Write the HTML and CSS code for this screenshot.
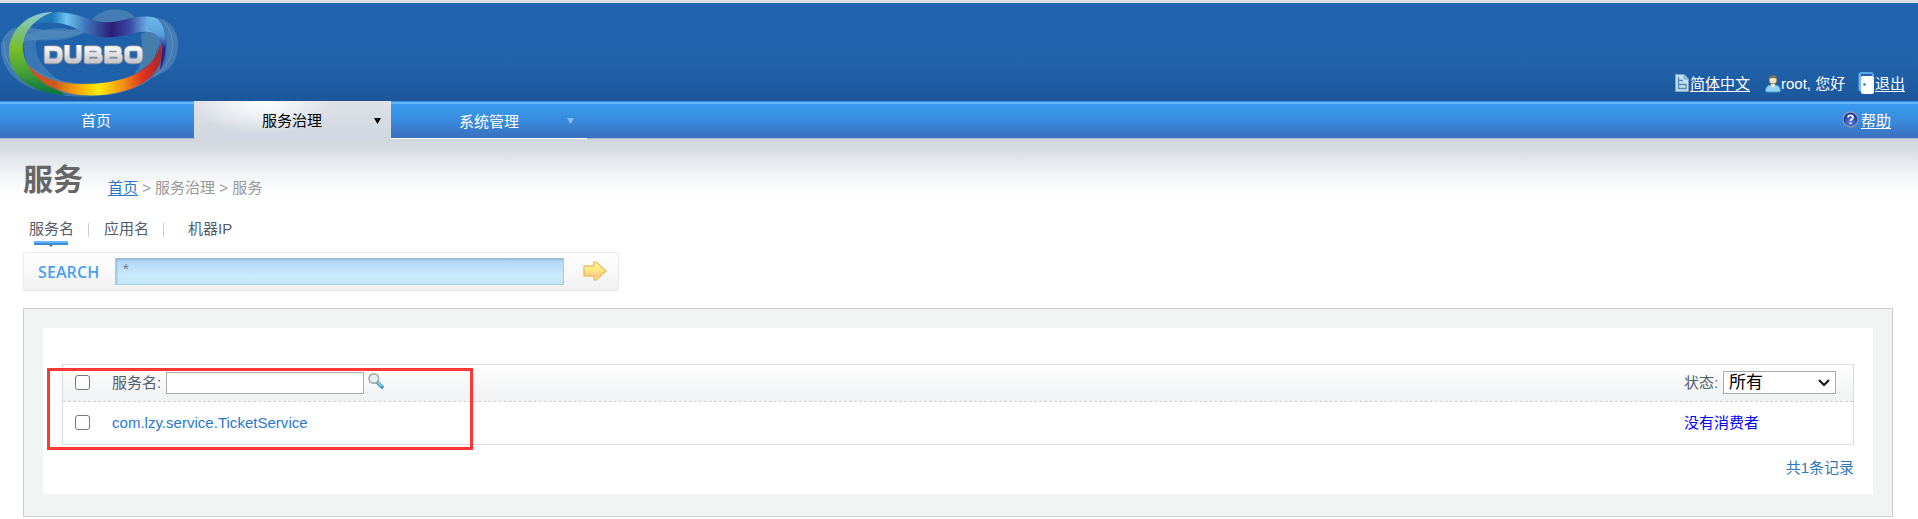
FILE: index.html
```html
<!DOCTYPE html>
<html lang="zh-CN">
<head>
<meta charset="utf-8">
<title>Dubbo</title>
<link rel="stylesheet" href="styles.css">
</head>
<body>
<header class="header">
  <svg class="logo" width="184" height="98" viewBox="0 3 184 98">
    <defs>
      <linearGradient id="ribbonTop" x1="35" x2="167" y1="0" y2="0" gradientUnits="userSpaceOnUse">
        <stop offset="0" stop-color="#2d8cc0" stop-opacity=".35"/><stop offset=".13" stop-color="#1d78bb"/><stop offset=".24" stop-color="#6cc2f0"/><stop offset=".38" stop-color="#3f77bd"/><stop offset=".58" stop-color="#2b1c78"/><stop offset=".72" stop-color="#3a4ca5"/><stop offset=".86" stop-color="#6cb7ec"/><stop offset="1" stop-color="#3c56a8"/>
      </linearGradient>
      <linearGradient id="ribbonLeft" x1="0" x2="0" y1="12" y2="95" gradientUnits="userSpaceOnUse">
        <stop offset="0" stop-color="#8ecbd6"/><stop offset=".2" stop-color="#7cc489"/><stop offset=".45" stop-color="#76bd28"/><stop offset=".7" stop-color="#49a535"/><stop offset="1" stop-color="#087340"/>
      </linearGradient>
      <linearGradient id="ribbonBottom" x1="27" x2="162" y1="0" y2="0" gradientUnits="userSpaceOnUse">
        <stop offset="0" stop-color="#e2432a"/><stop offset=".2" stop-color="#c95a20"/><stop offset=".36" stop-color="#f8a00c"/><stop offset=".53" stop-color="#ffed00"/><stop offset=".72" stop-color="#f08b13"/><stop offset=".86" stop-color="#df321f"/><stop offset="1" stop-color="#a52731"/>
      </linearGradient>
      <linearGradient id="ribbonRight" x1="0" x2="0" y1="18" y2="70" gradientUnits="userSpaceOnUse">
        <stop offset="0" stop-color="#6ab7e9"/><stop offset=".32" stop-color="#5aa0d9"/><stop offset=".58" stop-color="#29288a"/><stop offset="1" stop-color="#312277"/>
      </linearGradient>
      <linearGradient id="silver" x1="0" x2="0" y1="45" y2="64" gradientUnits="userSpaceOnUse">
        <stop offset="0" stop-color="#fff"/><stop offset=".5" stop-color="#dfe1e4"/><stop offset="1" stop-color="#bfc1c5"/>
      </linearGradient>
    </defs>
    <path d="M1 48C1 35 12 24 28 27C50 32 78 34 91 21C101 7 127 4 137 20C163 12 179 24 178 48C176 68 165 72 153 77C130 98 80 100 50 93C20 89 1 70 1 48Z" fill="#84a9c8" opacity=".36"/>
    <path d="M24 41C52 38 66 40 91 30C118 34 143 25 155 39C166 57 140 80 114 83C80 86 45 81 28 64C22 56 22 47 24 41Z" fill="#1f62ab"/>
    <path d="M4 42C3 65 18 79 48 89M164 22C180 40 172 66 153 77" fill="none" stroke="#8aaccc" opacity=".45"/>
    <path d="M25 36Q55 22 84 33Q64 44 23 39Z" fill="#538dbe" opacity=".6"/>
    <path d="M141 34L154 31Q162 47 151 63L134 75Q145 61 142 45Z" fill="#4c83ad" opacity=".85"/>
    <path d="M23 40L37 38Q30 62 65 84Q44 84 27 70Z" fill="#538dbe" opacity=".5"/>
    <path d="M53 12C29 12 9 29 9 52C9 79 35 94 66 95L58 90C40 83 24 67 23 50C22 34 31 21 53 12Z" fill="url(#ribbonLeft)"/>
    <path d="M34 24C42 13 57 11 67 13C84 15 94 24 112 22C128 20 137 15 151 17C164 20 168 35 166 53C166 62 164 68 160 71L162 45C158 27 142 31 130 34C115 38 99 40 83 32C70 25 57 20 34 24Z" fill="url(#ribbonTop)"/>
    <path d="M148 17Q158 15 163 27Q170 47 160 71L162 48Q158 30 147 30Z" fill="url(#ribbonRight)"/>
    <path d="M27 64C37 76 55 84 83 84C122 84 156 72 160 43C169 72 140 92 102 95C66 98 38 86 27 64Z" fill="url(#ribbonBottom)"/>
    <g fill="none" stroke="#858e9c" stroke-width="6.5" stroke-linejoin="round"><path id="word" d="M47 48.5H55Q60 48.5 60 53V56Q60 61 55 61H47ZM67 45V57Q67 61 71 61H75Q79 61 79 57V45M87 48.5H96Q99 48.5 99 51.5Q99 54.5 96 54.5H87H97Q100 54.5 100 58Q100 61 97 61H87ZM107 48.5H116Q119 48.5 119 51.5Q119 54.5 116 54.5H107H117Q120 54.5 120 58Q120 61 117 61H107ZM131 48.5H136Q140 48.5 140 52V57Q140 61 136 61H131Q127 61 127 57V52Q127 48.5 131 48.5Z"/></g>
    <use href="#word" fill="none" stroke="url(#silver)" stroke-width="4.7"/>
  </svg>
  <div class="account">
    <svg class="doc" width="14" height="18" viewBox="0 0 14 18"><path d="M.5.5H9L13.5 5V17.5H.5Z" fill="#c5dff2" stroke="#7fa5c9"/><path d="M9 1V5H13" fill="#9fc1df" stroke="#7fa5c9"/><path d="M3.5 3V14.5H11V10.5H3.5M3.5 6.5H8" fill="none" stroke="#5787b2" stroke-width="1.3"/></svg>
    <a class="language">简体中文</a>
    <svg class="user" width="16" height="18" viewBox="0 0 16 18"><path d="M1 17C0 13 2 10 6 10H10C14 10 16 13 15 17Z" fill="#91d4f4" stroke="#4597cb"/><path d="M6 9H10V11L8 13L6 11Z" fill="#f6f5df"/><circle cx="8" cy="5" r="4" fill="#f2e6c8" stroke="#8c7b62"/><path d="M4 4Q4 0 8 0Q12 0 12 4Q8 2 4 4Z" fill="#786e60"/></svg>
    <span class="name">root, 您好</span>
    <svg class="door" width="16" height="22" viewBox="0 0 16 22"><path d="M1.5 19V3Q1.5 1 4 1H13Q15 1 15 4" fill="none" stroke="#5ba7ed" stroke-width="2"/><path d="M1 1L4 5V21L1 18Z" fill="#77b6ef"/><rect x="3" y="4" width="13" height="18" rx="2" fill="#fff"/><circle cx="6.5" cy="12.5" r="1.3" fill="#3978b5"/></svg>
    <a>退出</a>
  </div>
</header>
<nav class="nav">
  <div class="item home">首页</div>
  <div class="item active">服务治理<svg class="caret" width="7" height="6" viewBox="0 0 7 6"><path d="M0 0H7L3.5 6Z"/></svg></div>
  <div class="item system">系统管理<svg class="caret" width="7" height="6" viewBox="0 0 7 6"><path d="M0 0H7L3.5 6Z"/></svg></div>
  <div class="help">
    <svg width="17" height="17" viewBox="0 0 17 17"><defs><radialGradient id="ball" cx=".5" cy=".7"><stop offset="0" stop-color="#668df0"/><stop offset="1" stop-color="#203797"/></radialGradient></defs><circle cx="8.5" cy="8.5" r="7.5" fill="url(#ball)" stroke="#8894b8" stroke-width="1.3"/><path d="M6 6.5Q6 4.3 8.5 4.3Q11 4.3 11 6.4Q11 7.5 9.5 8.3Q8.6 8.8 8.6 10M8.6 11.5V13" fill="none" stroke="#fff" stroke-width="1.7"/></svg>
    <a>帮助</a>
  </div>
</nav>
<main class="main">
  <div class="title"><h1>服务</h1><div class="crumbs"><a>首页</a> &gt; 服务治理 &gt; 服务</div></div>
  <div class="tabs"><span class="tab current">服务名</span><i></i><span class="tab">应用名</span><i></i><span class="tab last">机器IP</span></div>
  <div class="search">
    <span class="label">SEARCH</span>
    <div class="query">*</div>
    <svg class="go" width="24" height="20" viewBox="0 0 24 20"><defs><linearGradient id="gold" x2="0" y2="1"><stop offset="0" stop-color="#fff7a0"/><stop offset=".45" stop-color="#ffe983"/><stop offset=".75" stop-color="#ffc98a"/><stop offset="1" stop-color="#ffe778"/></linearGradient></defs><path d="M1 5H11V1H13L23 10L13 19H11V15H1Z" fill="url(#gold)" stroke="#e6c465" stroke-width="1.5" stroke-linejoin="round"/></svg>
  </div>
  <section class="panel">
    <div class="content">
      <div class="table">
        <div class="row head">
          <span class="check"></span><span class="cell">服务名:</span><input class="filter" type="text">
          <svg class="lens" width="16" height="16" viewBox="0 0 16 16"><path d="M9.5 9.5L14 14" stroke="#3f98d8" stroke-width="3.6" stroke-linecap="round"/><path d="M10 9.5L13.5 13" stroke="#9ddcfa" stroke-width="1.3"/><circle cx="5.8" cy="5.5" r="4.8" fill="#e6f0ef" stroke="#9aa6a3" stroke-width="1.4"/></svg>
          <span class="state">状态:</span>
          <div class="select">所有<svg width="12" height="8" viewBox="0 0 12 8"><path d="M1 1L6 6L11 1" fill="none" stroke="#111" stroke-width="2"/></svg></div>
        </div>
        <div class="row body"><span class="check"></span><a class="service">com.lzy.service.TicketService</a><span class="none">没有消费者</span></div>
        <div class="mark"></div>
      </div>
      <div class="total">共1条记录</div>
    </div>
  </section>
</main>
</body>
</html>
```
FILE: styles.css
```css
* { box-sizing: border-box; }
body { margin: 0; height: 519px; overflow: hidden; background: #fff; color: #535c68; font: 15px/20px "Liberation Sans", "Noto Sans CJK SC", sans-serif; }
svg { display: block; flex: none; }
span, a { white-space: nowrap; }
.header { height: 101px; border-top: 3px solid #dce0e4; display: flex; justify-content: space-between; background: linear-gradient(#2064ae, #2062aa 65%, #1b569a); color: #fff; }
.account { display: flex; align-items: flex-start; padding: 71px 13px 0 0; line-height: 20px; }
.account a, .help a { text-decoration: underline; text-underline-offset: 2px; }
.doc { margin: 0 1px 0 0; }
.language { width: 60px; }
.user { margin: 1px 0 0 15px; }
.name { width: 64px; margin-left: 0; }
.door { margin: -2px 1px 0 13px; }
.nav { height: 38px; display: flex; color: #fff; background: linear-gradient(#3391e6 0 1px, #65b6f5 1px 3px, #389df3 3px, #388bdd 50%, #3b70bd 37px, #9fb9dd 37px); }
.item { display: flex; align-items: center; position: relative; padding-bottom: 1px; }
.home { width: 194px; padding-left: 81px; padding-top: 3px; }
.active { width: 197px; padding-left: 68px; padding-top: 3px; color: #000; background: radial-gradient(ellipse 70px 34px at 35% 0, #fff, #fff0), linear-gradient(#dee1e7, #d0d7e0); }
.system { width: 196px; padding: 6px 0 1px 68px; border-bottom: 1px solid #fff; }
.caret { position: absolute; right: 10px; top: 17px; fill: #000; }
.system .caret { right: 13px; fill: #82c0f8; }
.help { margin-left: auto; display: flex; padding: 10px 27px 0 0; gap: 2px; }
.main { height: 380px; padding: 19px 25px 0 23px; background: linear-gradient(#d0d5dd, #dfe3e8 16px, #f2f4f5 35px, #fff 56px); }
.title { height: 57px; display: flex; }
h1 { width: 85px; margin: 0; font: bold 30px/44px "Liberation Sans", "Noto Sans CJK SC", sans-serif; color: #666; }
.crumbs { padding-top: 20px; color: #999; }
.crumbs a { color: #2a78ce; text-decoration: underline; text-underline-offset: 2px; }
.tabs { height: 37px; display: flex; align-items: flex-start; padding: 4px 0 0 6px; }
.tab { position: relative; width: 45px; }
.tabs i { width: 1px; height: 14px; margin: 4px 15px 0 14px; background: #ccc; }
.last { margin-left: 9px; }
.current::before { content: ""; position: absolute; left: 5px; top: 22px; width: 34px; height: 4px; background: linear-gradient(#66b8f5 0 2px, #3d8dd0 2px); }
.current::after { content: ""; position: absolute; left: 20px; top: 26px; border: 2px solid transparent; border-top-color: #3480bd; border-bottom: 0; }
.search { width: 596px; height: 39px; display: flex; align-items: center; border: 1px solid #e6e9ee; border-radius: 2px; background: linear-gradient(#fff, #f1f1f2); }
.label { width: 91px; padding-left: 14px; color: #4ba0ee; font: 600 16px/20px "Open Sans", sans-serif; letter-spacing: .1px; }
.query { width: 449px; height: 27px; margin: 0 19px 1px 0; padding-left: 7px; line-height: 20px; color: #777; border: 1px solid #a7cfe2; border-top-color: #99b9d7; background: linear-gradient(#b1d6f5, #caeafd 70%, #c4e8f5); box-shadow: inset 1px 1px 2px #91bade; }
.go { margin-bottom: 1px; }
.panel { height: 209px; margin-top: 17px; padding: 19px; border: 1px solid #ccc; background: #f2f4f4; }
.content { height: 166px; padding: 36px 19px 0; background: #fff; }
.table { position: relative; height: 81px; border: 1px solid #ddd; }
.row { display: flex; padding-left: 12px; }
.head { height: 37px; border-bottom: 1px dashed #ccd0d5; background: linear-gradient(#fff, #f0f1f3); }
.check { width: 15px; height: 15px; margin-right: 22px; border: 1.5px solid #767676; border-radius: 3px; background: #fff; }
.head .check { margin-top: 10px; }
.cell { width: 54px; padding-top: 8px; }
.filter { width: 198px; height: 22px; margin-top: 7px; padding: 1px; border: 1px solid #aaa; outline: 0; }
.lens { margin: 8px 0 0 4px; }
.state { margin-left: auto; width: 39px; padding-top: 8px; }
.select { width: 113px; height: 23px; margin: 6px 17px 0 0; padding: 0 5px; display: flex; align-items: center; justify-content: space-between; border: 1px solid #aaa; background: #fff; color: #000; font-size: 17px; }
.body { padding-top: 11px; }
.body .check { margin-top: 2px; }
.service { color: #2a78ce; letter-spacing: .02px; }
.none { width: 169px; margin-left: auto; color: #00f; }
.mark { position: absolute; left: -16px; top: 3px; width: 426px; height: 82px; border: 3px solid #ff3737; }
.total { padding-top: 13px; text-align: right; color: #2a78ba; }
```
